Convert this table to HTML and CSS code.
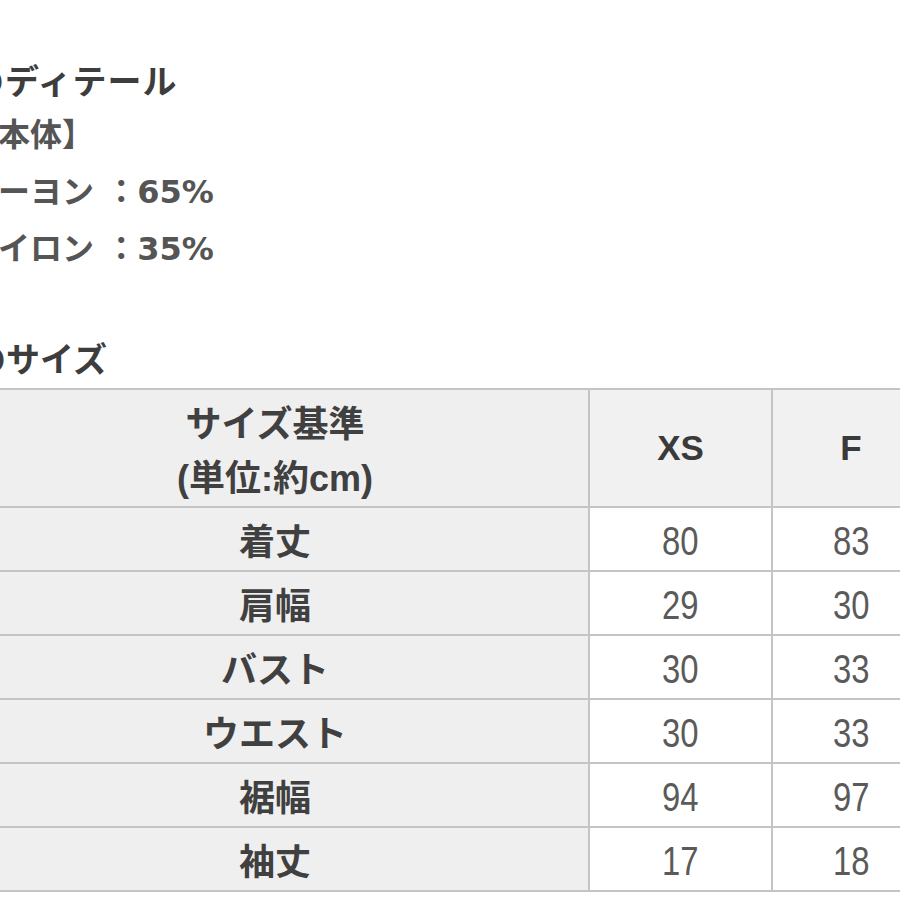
FILE: index.html
```html
<!DOCTYPE html>
<html lang="ja">
<head>
<meta charset="utf-8">
<title>素材のディテール</title>
<link rel="stylesheet" href="styles.css">
</head>
<body>
<div class="page">
  <h2 class="heading heading-first">素材のディテール</h2>
  <p class="item">【本体】</p>
  <p class="item">レーヨン ：65%</p>
  <p class="item">ナイロン ：35%</p>
  <h2 class="heading heading-size">商品のサイズ</h2>
  <table class="size-table">
    <colgroup>
      <col class="c-label">
      <col class="c-xs">
      <col class="c-f">
    </colgroup>
    <thead>
      <tr>
        <th class="label head-label">サイズ基準<br>(単位:約cm)</th>
        <th class="size">XS</th>
        <th class="size">F</th>
      </tr>
    </thead>
    <tbody>
      <tr><td class="label">着丈</td><td class="val"><span class="num">80</span></td><td class="val"><span class="num">83</span></td></tr>
      <tr><td class="label">肩幅</td><td class="val"><span class="num">29</span></td><td class="val"><span class="num">30</span></td></tr>
      <tr><td class="label">バスト</td><td class="val"><span class="num">30</span></td><td class="val"><span class="num">33</span></td></tr>
      <tr><td class="label">ウエスト</td><td class="val"><span class="num">30</span></td><td class="val"><span class="num">33</span></td></tr>
      <tr><td class="label">裾幅</td><td class="val"><span class="num">94</span></td><td class="val"><span class="num">97</span></td></tr>
      <tr><td class="label">袖丈</td><td class="val"><span class="num">17</span></td><td class="val"><span class="num">18</span></td></tr>
    </tbody>
  </table>
</div>
</body>
</html>
```

FILE: styles.css
```css
html, body {
  margin: 0;
  padding: 0;
  background: #ffffff;
  overflow: hidden;
}

body {
  font-family: "Liberation Sans", "Noto Sans CJK JP", sans-serif;
  color: #444444;
}

.page {
  margin-left: -34px;
  padding-top: 57px;
  width: 1000px;
}

.heading {
  margin: 0;
  font-size: 34px;
  font-weight: 700;
  color: #3d3d3d;
  line-height: 50px;
  margin-left: -62px;
  letter-spacing: 1px;
  white-space: nowrap;
}

.heading-first {
  margin-left: -66px;
}

.heading-size {
  margin-top: 54px;
  line-height: 56px;
  margin-left: -62px;
  letter-spacing: 0;
}

.item {
  margin: 0;
  font-family: "DejaVu Sans", "Noto Sans CJK JP", sans-serif;
  font-size: 32px;
  font-weight: 700;
  color: #555555;
  line-height: 57px;
  white-space: nowrap;
}

.size-table {
  margin-left: -6px;
  border-collapse: collapse;
  table-layout: fixed;
  width: 969px;
}

.c-label { width: 628px; }
.c-xs { width: 183px; }
.c-f { width: 158px; }

.size-table th,
.size-table td {
  border: 2px solid #c4c4c4;
  padding: 0;
  text-align: center;
  vertical-align: middle;
}

.size-table thead tr { height: 118px; }
.size-table tbody tr { height: 64px; }

.label {
  background: #efefef;
  font-size: 36px;
  font-weight: 700;
  color: #404040;
}

.size-table .head-label {
  line-height: 54px;
  padding-top: 8px;
}

.size {
  background: #f1f1f1;
  font-size: 35px;
  font-weight: 700;
  color: #3a3a3a;
}

.val {
  background: #ffffff;
}

.num {
  display: inline-block;
  font-size: 40px;
  font-weight: 400;
  color: #5a5a5a;
  transform: scaleX(0.82);
  padding-top: 4px;
}
```
